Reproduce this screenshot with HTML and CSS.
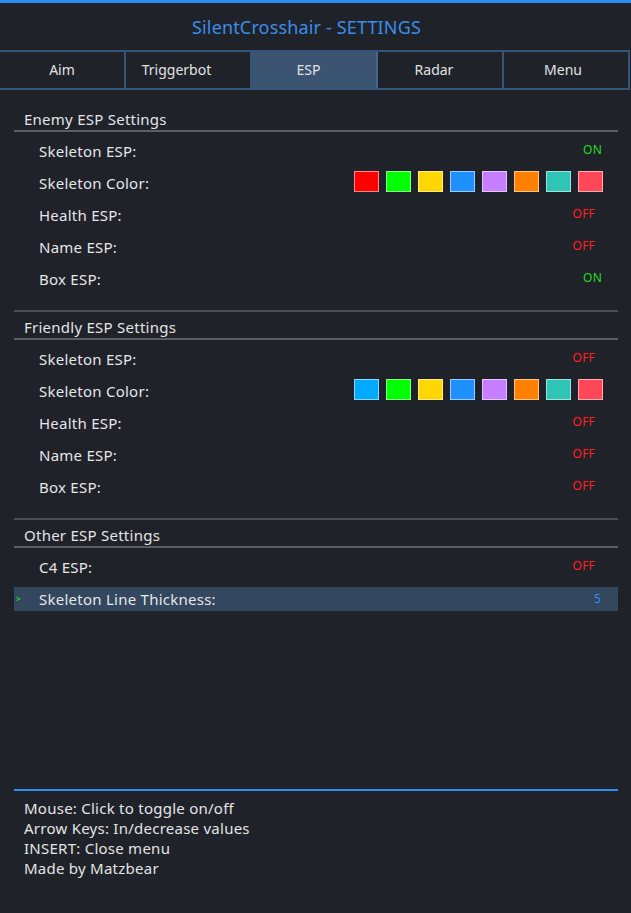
FILE: index.html
```html
<!DOCTYPE html>
<html>
<head>
<meta charset="utf-8">
<link rel="stylesheet" href="styles.css">
</head>
<body>
<div class="app">
  <div class="topbar"></div>
  <div class="title">SilentCrosshair - SETTINGS</div>
  <div class="tabs">
    <div class="tab">Aim</div>
    <div class="tab tab-trigger">Triggerbot</div>
    <div class="tab tab-esp active">ESP</div>
    <div class="tab tab-radar">Radar</div>
    <div class="tab tab-menu">Menu</div>
  </div>

  <div class="content">
    <div class="section first">
      <div class="section-head">Enemy ESP Settings</div>
      <div class="rows">
        <div class="row"><span class="marker"></span><span class="label">Skeleton ESP:</span><span class="val on">ON</span></div>
        <div class="row"><span class="marker"></span><span class="label">Skeleton Color:</span>
          <span class="swatches">
            <span class="sw c-red"></span><span class="sw c-green"></span><span class="sw c-yellow"></span><span class="sw c-blue"></span><span class="sw c-purple"></span><span class="sw c-orange"></span><span class="sw c-teal"></span><span class="sw c-pink"></span>
          </span>
        </div>
        <div class="row"><span class="marker"></span><span class="label">Health ESP:</span><span class="val off">OFF</span></div>
        <div class="row"><span class="marker"></span><span class="label">Name ESP:</span><span class="val off">OFF</span></div>
        <div class="row"><span class="marker"></span><span class="label">Box ESP:</span><span class="val on">ON</span></div>
      </div>
    </div>

    <div class="section">
      <div class="section-head">Friendly ESP Settings</div>
      <div class="rows">
        <div class="row"><span class="marker"></span><span class="label">Skeleton ESP:</span><span class="val off">OFF</span></div>
        <div class="row"><span class="marker"></span><span class="label">Skeleton Color:</span>
          <span class="swatches">
            <span class="sw c-sky"></span><span class="sw c-green"></span><span class="sw c-yellow"></span><span class="sw c-blue"></span><span class="sw c-purple"></span><span class="sw c-orange"></span><span class="sw c-teal"></span><span class="sw c-pink"></span>
          </span>
        </div>
        <div class="row"><span class="marker"></span><span class="label">Health ESP:</span><span class="val off">OFF</span></div>
        <div class="row"><span class="marker"></span><span class="label">Name ESP:</span><span class="val off">OFF</span></div>
        <div class="row"><span class="marker"></span><span class="label">Box ESP:</span><span class="val off">OFF</span></div>
      </div>
    </div>

    <div class="section">
      <div class="section-head">Other ESP Settings</div>
      <div class="rows">
        <div class="row"><span class="marker"></span><span class="label">C4 ESP:</span><span class="val off">OFF</span></div>
        <div class="row selected"><span class="marker">&gt;</span><span class="label">Skeleton Line Thickness:</span><span class="val num">5</span></div>
      </div>
    </div>
  </div>

  <div class="footer">
    <div class="help">Mouse: Click to toggle on/off</div>
    <div class="help">Arrow Keys: In/decrease values</div>
    <div class="help">INSERT: Close menu</div>
    <div class="help">Made by Matzbear</div>
  </div>
</div>
</body>
</html>
```

FILE: styles.css
```css
html, body {
  margin: 0;
  padding: 0;
  background: #1f2229;
}

.app {
  display: flex;
  flex-direction: column;
  min-height: 913px;
  width: 631px;
  font-family: "Noto Sans", "Open Sans", sans-serif;
  color: #e4e4e4;
  background: #1f2229;
}

.topbar {
  height: 3px;
  background: #2d8ef0;
}

.title {
  height: 47px;
  display: flex;
  align-items: center;
  justify-content: center;
  padding-right: 18px;
  font-size: 18px;
  letter-spacing: 0.15px;
  color: #3a8ee8;
}

.tabs {
  display: grid;
  grid-template-columns: repeat(5, 1fr);
  width: 630px;
  height: 40px;
  box-sizing: border-box;
  border-top: 2px solid #34547a;
  border-bottom: 2px solid #34547a;
}

.tab {
  display: flex;
  align-items: center;
  justify-content: center;
  padding-bottom: 2px;
  font-size: 14px;
  color: #e2e2e2;
  border-right: 2px solid #34547a;
}

.tab-trigger { padding-right: 23px; }
.tab-esp { padding-right: 11px; }
.tab-radar { padding-right: 12px; }
.tab-menu { padding-right: 6px; }

.tab.active {
  background: #3a5472;
  border-right-color: #46678e;
}

.content {
  margin: 0 13px 0 14px;
  display: flex;
  flex-direction: column;
}

.section {
  border-top: 2px solid #4a4d55;
  margin-top: 19px;
}

.section.first {
  border-top: none;
  margin-top: 14px;
}

.section-head {
  height: 28px;
  padding: 4px 0 0 10px;
  box-sizing: border-box;
  line-height: 22px;
  font-size: 15px;
  letter-spacing: 0.25px;
  border-bottom: 2px solid #5a5d64;
}

.rows {
  display: flex;
  flex-direction: column;
  gap: 8px;
  padding-top: 7px;
}

.row {
  display: flex;
  align-items: center;
  height: 24px;
  font-size: 15px;
  letter-spacing: 0.25px;
}

.row.selected {
  background: #33475f;
}

.marker {
  width: 25px;
  flex: none;
  box-sizing: border-box;
  padding-left: 2px;
  font-size: 8px;
  font-weight: bold;
  color: #22d422;
  margin-top: -2px;
}

.label {
  flex: 1;
  color: #e6e6e6;
}

.val {
  font-size: 12px;
  letter-spacing: 0.2px;
  margin-bottom: 4px;
}

.val.on {
  color: #22dd22;
  padding-right: 16px;
}

.val.off {
  color: #ff2020;
  padding-right: 23px;
}

.val.num {
  color: #3a8ee8;
  font-size: 12px;
  margin-bottom: 2px;
  padding-right: 17px;
}

.swatches {
  display: flex;
  gap: 7px;
  padding-right: 15px;
  margin-bottom: 4px;
}

.sw {
  width: 25px;
  height: 21px;
  box-sizing: border-box;
  border: 1px solid rgba(255, 255, 255, 0.55);
}

.c-red { background: #ff0000; }
.c-green { background: #00ff00; }
.c-yellow { background: #ffd700; }
.c-blue { background: #1e90ff; }
.c-purple { background: #c77dff; }
.c-orange { background: #ff8000; }
.c-teal { background: #2ec4b6; }
.c-pink { background: #ff4757; }
.c-sky { background: #00aaff; }

.footer {
  margin: auto 13px 0 14px;
  border-top: 2px solid #2d8ef0;
  padding: 7px 0 35px 10px;
}

.help {
  font-size: 15px;
  letter-spacing: 0.25px;
  line-height: 20px;
  color: #e4e4e4;
}
```
